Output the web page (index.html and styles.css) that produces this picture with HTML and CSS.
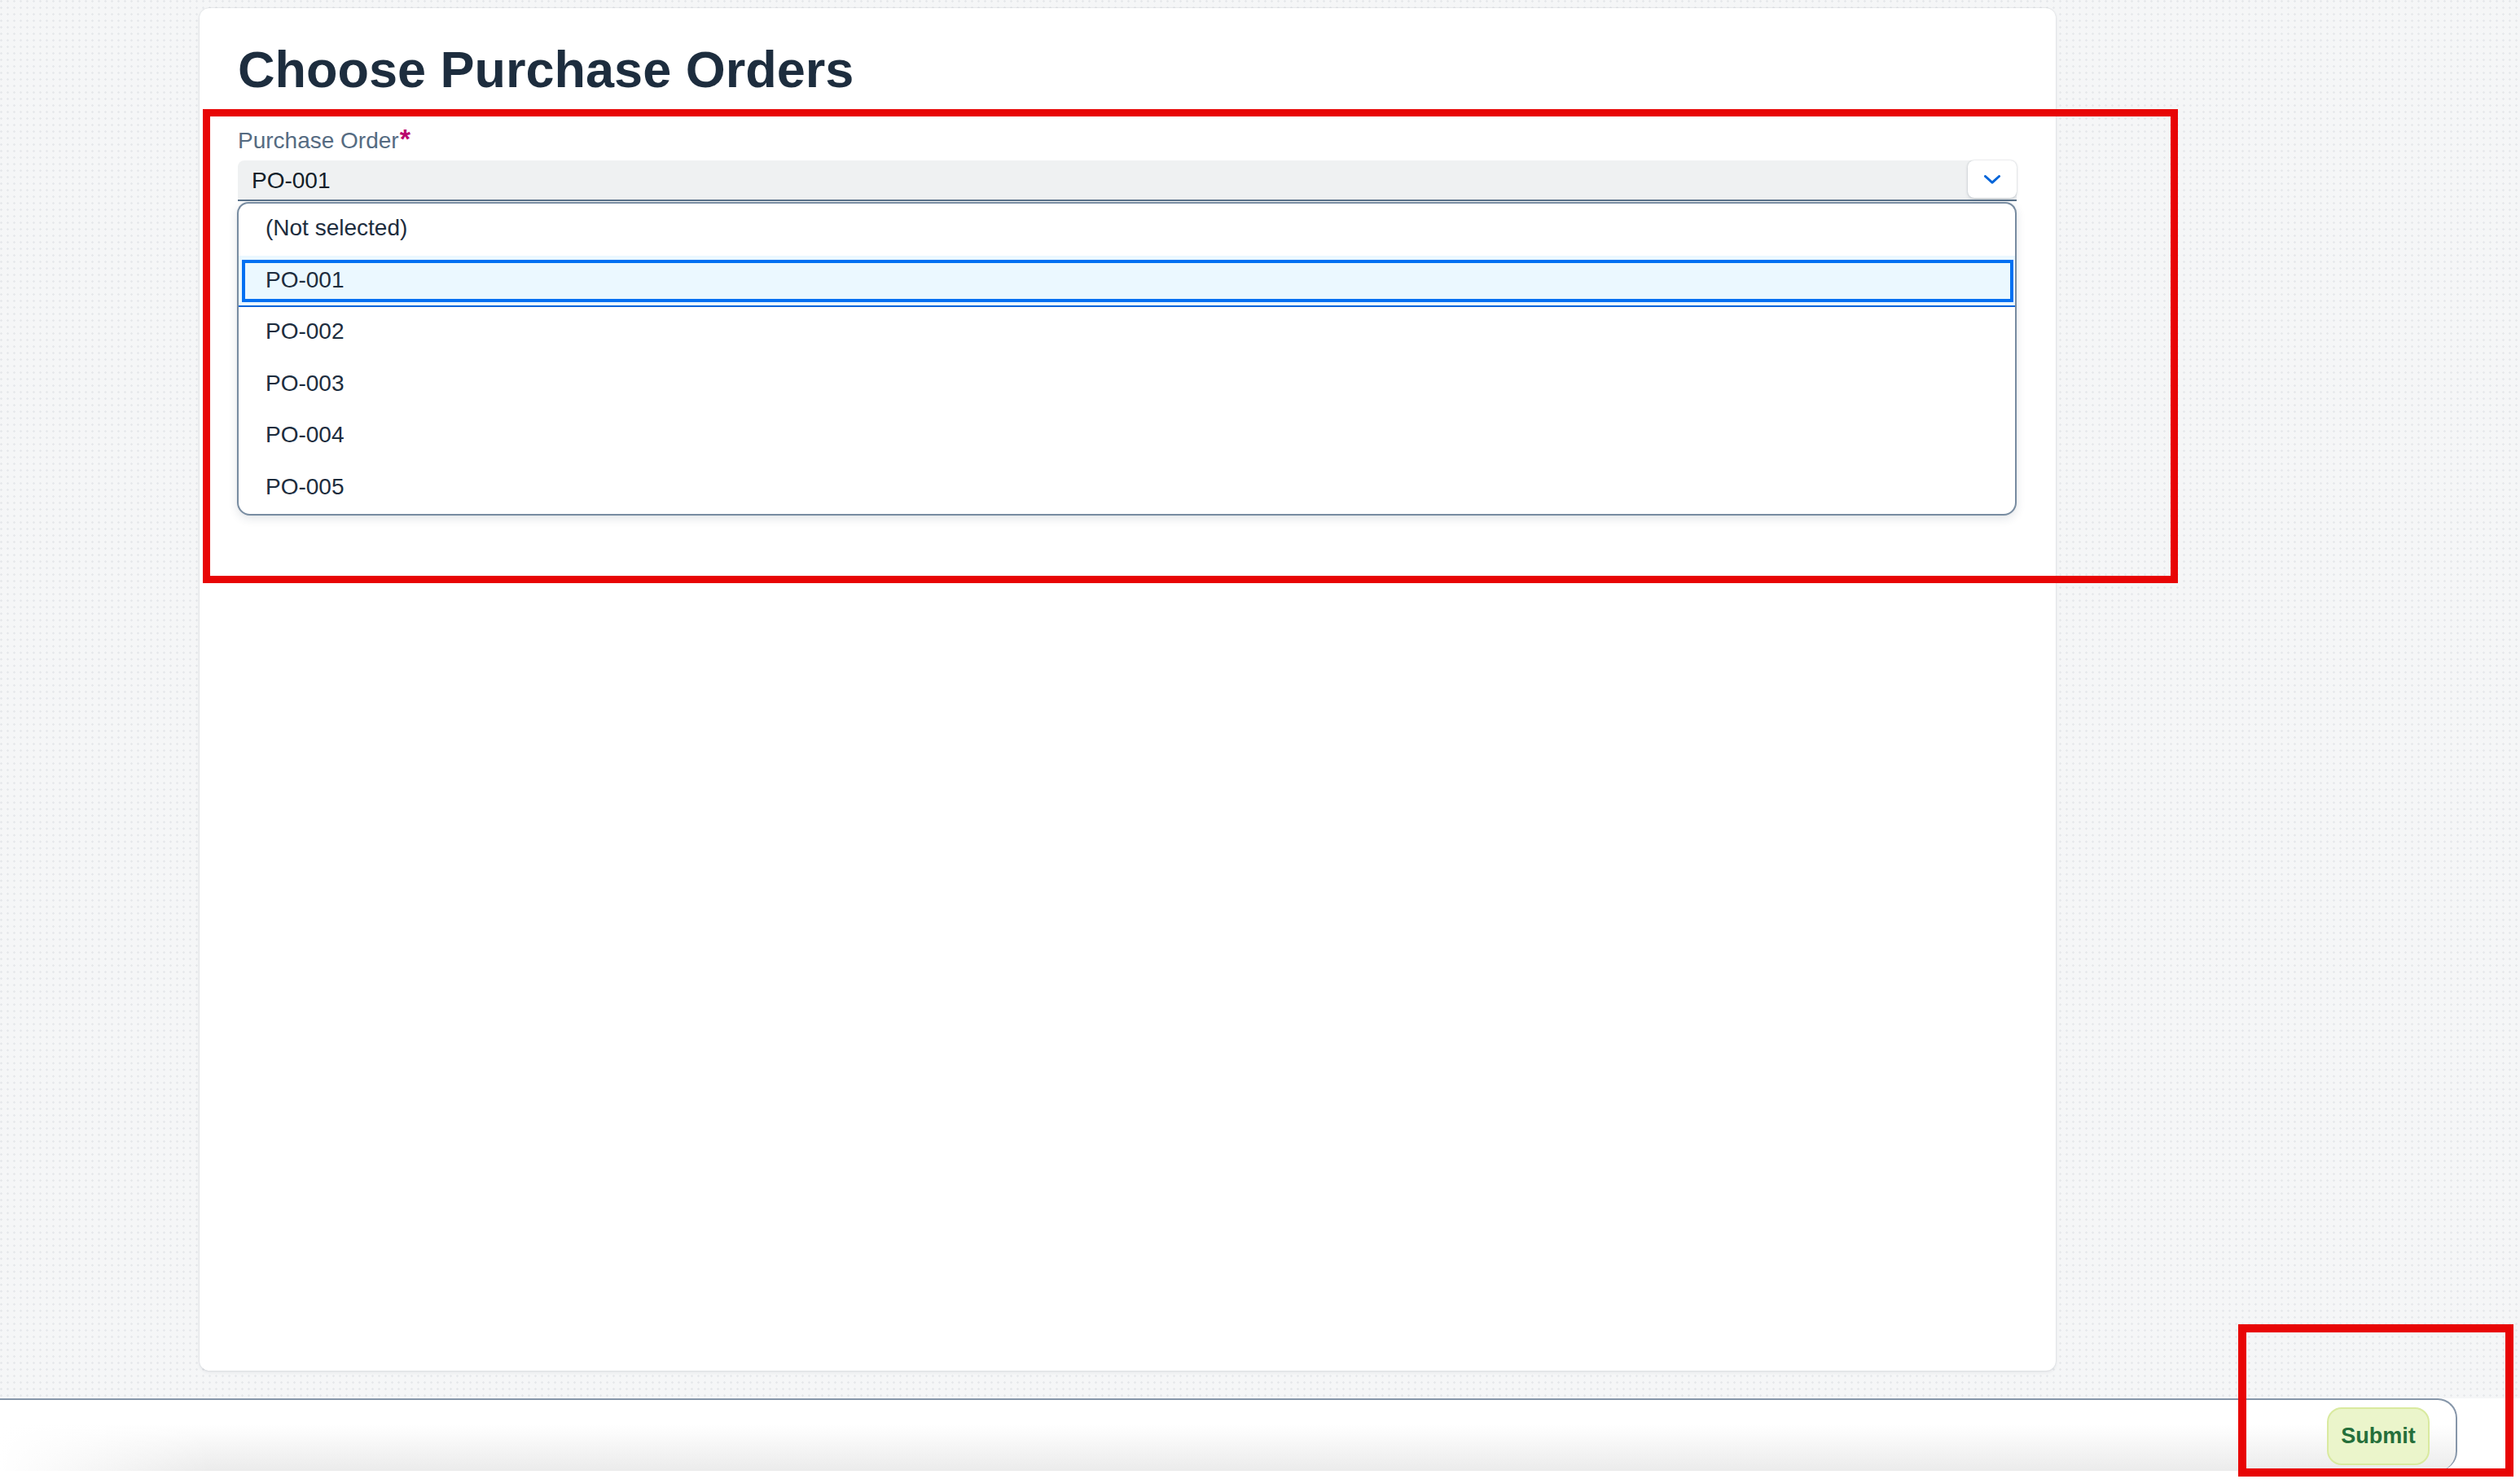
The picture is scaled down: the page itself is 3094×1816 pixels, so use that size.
FILE: index.html
```html
<!DOCTYPE html>
<html lang="en">
<head>
<meta charset="utf-8">
<title>Choose Purchase Orders</title>
<link rel="stylesheet" href="styles.css">
</head>
<body>
<div class="page">
  <main class="card">
    <h1 class="title">Choose Purchase Orders</h1>
    <div class="field">
      <label class="label">Purchase Order<span class="req">*</span></label>
      <div class="select">
        <span class="select-value">PO-001</span>
        <span class="select-btn">
          <svg width="20" height="11" viewBox="0 0 20 11"><polyline points="1.5,1.5 10,9.2 18.5,1.5" fill="none" stroke="#0064d9" stroke-width="3" stroke-linecap="round" stroke-linejoin="round"/></svg>
        </span>
      </div>
      <ul class="list">
        <li class="item">(Not selected)</li>
        <li class="item selected">PO-001</li>
        <li class="item">PO-002</li>
        <li class="item">PO-003</li>
        <li class="item">PO-004</li>
        <li class="item">PO-005</li>
      </ul>
    </div>
  </main>
</div>
<footer class="footer">
  <button class="submit">Submit</button>
</footer>
<div class="mark mark-form"></div>
<div class="mark mark-submit"></div>
</body>
</html>
```

FILE: styles.css
```css
html, body {
  margin: 0;
  padding: 0;
  background: #ffffff;
}
body {
  width: 3094px;
  height: 1816px;
  overflow: hidden;
  position: relative;
  font-family: "Liberation Sans", Arial, sans-serif;
  color: #1d2d3e;
}
.page {
  box-sizing: border-box;
  height: 1717px;
  padding: 10px 0 0 245px;
  background-color: #f5f6f7;
  background-image: radial-gradient(circle at 1.5px 1.5px, #e6e8eb 1px, rgba(230,232,235,0) 1.5px);
  background-size: 8px 8px;
}
.card {
  box-sizing: border-box;
  width: 2279px;
  height: 1673px;
  background: #ffffff;
  border-radius: 12px;
  box-shadow: 0 0 2px rgba(34,53,72,0.18), 0 2px 4px rgba(34,53,72,0.08);
  padding: 37px 48px 0 47px;
}
.title {
  margin: 0;
  font-size: 63px;
  line-height: 76px;
  font-weight: 700;
  color: #1d2d3e;
}
.field {
  margin-top: 34px;
}
.label {
  display: block;
  font-size: 28px;
  line-height: 32px;
  color: #556b82;
}
.req {
  color: #ba066c;
  font-weight: 700;
  font-size: 34px;
  line-height: 0;
  margin-left: 1px;
}
.select {
  margin-top: 8px;
  box-sizing: border-box;
  height: 50px;
  display: flex;
  align-items: flex-start;
  background: #eff1f2;
  border-bottom: 2px solid #5b738b;
  border-radius: 8px 8px 0 0;
}
.select-value {
  flex: 1;
  padding: 1px 0 0 17px;
  font-size: 28px;
  line-height: 48px;
  color: #131e29;
}
.select-btn {
  width: 60px;
  height: 46px;
  display: flex;
  align-items: center;
  justify-content: center;
  background: #ffffff;
  border-radius: 8px;
  box-shadow: 0 0 2px rgba(34,53,72,0.25), 0 2px 4px rgba(34,53,72,0.12);
}
.list {
  list-style: none;
  margin: 1px 0 0 -1px;
  padding: 0;
  box-sizing: border-box;
  width: 2185px;
  border: 2px solid #788ca1;
  border-radius: 14px 14px 16px 16px;
  background: #ffffff;
  box-shadow: 0 4px 12px rgba(34,53,72,0.12), 0 0 2px rgba(34,53,72,0.1);
  overflow: hidden;
}
.item {
  position: relative;
  box-sizing: border-box;
  height: 63.5px;
  display: flex;
  align-items: center;
  padding: 0 0 3px 33px;
  font-size: 28px;
  color: #1d2d3e;
}
.item.selected {
  background: #ebf8ff;
  border-bottom: 2px solid #0064d9;
  padding-bottom: 1px;
}
.item.selected::after {
  content: "";
  position: absolute;
  left: 4px;
  right: 2px;
  top: 5px;
  bottom: 4px;
  border: 4px solid #0070f2;
}
.footer {
  box-sizing: border-box;
  width: 3017px;
  height: 89px;
  border-top: 2px solid #8696a9;
  border-right: 2px solid #8696a9;
  border-radius: 0 24px 24px 0;
  background:
    linear-gradient(to right, #ffffff 0, rgba(255,255,255,0) 260px),
    linear-gradient(#ffffff 35%, #ebebeb 100%);
  display: flex;
  justify-content: flex-end;
  align-items: flex-start;
  padding: 9px 32px 0 0;
}
.submit {
  box-sizing: border-box;
  width: 126px;
  height: 71px;
  border: 2px solid #d9ea9f;
  border-radius: 18px;
  background: #ebf5cb;
  color: #256f3a;
  font-family: "Liberation Sans", Arial, sans-serif;
  font-weight: 700;
  font-size: 27px;
  padding: 0;
}
.mark {
  position: absolute;
  box-sizing: border-box;
  border: 9px solid #e80505;
}
.mark-form {
  left: 249px;
  top: 134px;
  width: 2425px;
  height: 582px;
}
.mark-submit {
  left: 2748px;
  top: 1626px;
  width: 338px;
  height: 187px;
  border-width: 10px;
}
```
